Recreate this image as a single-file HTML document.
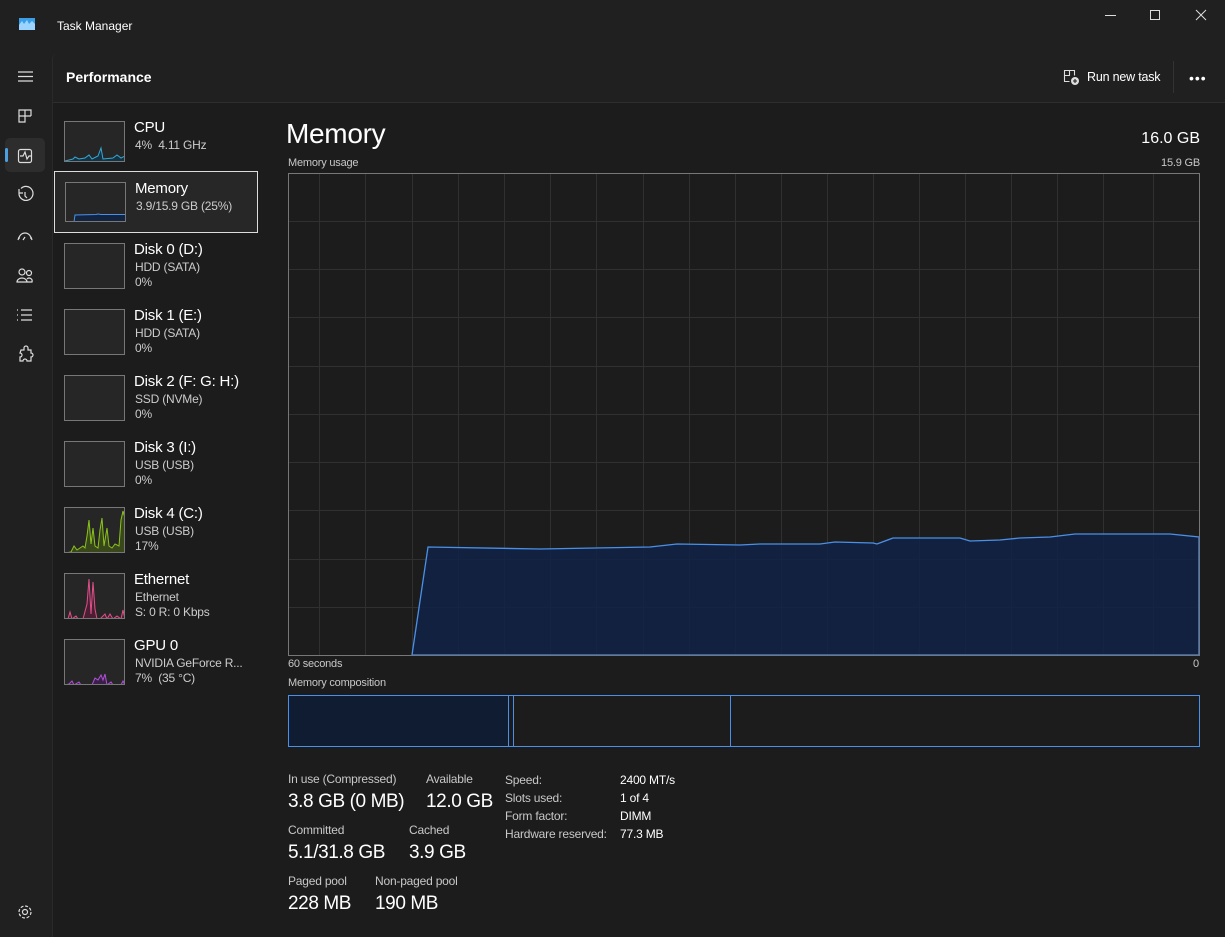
<!DOCTYPE html>
<html><head><meta charset="utf-8"><style>
*{margin:0;padding:0;box-sizing:border-box}
body{width:1225px;height:937px;background:#202020;font-family:"Segoe UI","Liberation Sans",sans-serif;color:#fff;position:relative;overflow:hidden}
.a{position:absolute;white-space:nowrap}
.main{position:absolute;left:52px;top:52px;width:1173px;height:885px;background:#1c1c1c;border-top-left-radius:8px;border-left:1px solid #2a2a2a}
.hdr{position:absolute;left:0;top:0;width:100%;height:51px;background:#202020;border-bottom:1px solid #2e2e2e;border-top-left-radius:8px}
.th{position:absolute;border:1px solid #777;background:#262626;overflow:hidden}
.nm{font-size:15px;color:#fff;letter-spacing:-0.2px}
.sb{font-size:12px;color:#ccc;letter-spacing:-0.2px}
.lab{font-size:12px;color:#c8c8c8;letter-spacing:-0.2px}
.val{font-size:19px;color:#fff;letter-spacing:-0.4px}
</style></head><body>
<svg class="a" style="left:19px;top:18px" width="16" height="12" viewBox="0 0 16 12"><rect width="16" height="12" fill="#3a9fe6"/><path d="M0 7 L3 3 L5 6 L8 2 L10 6 L13 3 L16 6 L16 12 L0 12Z" fill="#9ad4ff"/></svg>
<div class="a" style="left:57px;top:19px;font-size:12px;color:#fff">Task Manager</div>
<svg class="a" style="left:1100px;top:8px" width="120" height="16"><line x1="5" y1="7.5" x2="16" y2="7.5" stroke="#ddd"/><rect x="50.5" y="2.5" width="9" height="9" fill="none" stroke="#ddd"/><path d="M96 2 L106 12 M106 2 L96 12" stroke="#ddd"/></svg>
<svg class="a" style="left:0;top:60px" width="52" height="320" fill="none" stroke="#ddd" stroke-width="1.2">
<path d="M18 12h15M18 16.5h15M18 21h15"/>
<path d="M19 50h6v6h-6zM25 50h6v6M19 56v6h6v-6h6"/>
<rect x="5" y="78" width="40" height="34" rx="5" fill="#2d2d2d" stroke="none"/>
<rect x="5" y="88" width="3" height="14" rx="1.5" fill="#4ca0e0" stroke="none"/>
<rect x="18.5" y="89.5" width="13" height="13" rx="2"/><path d="M20 96h3l2-4 2 7 2-3h2"/>
<path d="M19 133a7 7 0 1 0 2-4.5M19 129v4h4M25 132v4l2 2"/>
<path d="M19 179a6 6 0 0 1 12 0M23 180l2-3M19 177l-1 3M31 177l1 3"/>
<circle cx="22" cy="212" r="3"/><circle cx="29" cy="213" r="2.5"/><path d="M17 222a5 4 0 0 1 10 0zM26 222h6a3 3 0 0 0-5-3"/>
<path d="M21 250h11M21 255h11M21 260h11M17 250h1M17 255h1M17 260h1"/>
<path d="M21 290h3v-2a2 2 0 0 1 4 0v2h3v3a2 2 0 0 1 0 4v4h-4a2 2 0 0 0-4 0h-3v-4a2 2 0 0 0 0-4z"/>
</svg>
<svg class="a" style="left:17px;top:904px" width="16" height="16" fill="none" stroke="#ddd" stroke-width="1.2"><circle cx="8" cy="8" r="2.5"/><circle cx="8" cy="8" r="6" stroke-dasharray="3 1.7"/></svg>
<div class="main">
<div class="hdr"></div>
</div>
<div class="a" style="left:66px;top:69px;font-size:14px;font-weight:bold">Performance</div>
<svg class="a" style="left:1063px;top:69px" width="17" height="17" fill="none" stroke="#ddd" stroke-width="1.1"><path d="M1.5 1.5h5v5h-5zM6.5 1.5h5v5M1.5 6.5v6h5"/><circle cx="12" cy="12" r="4" fill="#ddd" stroke="none"/><path d="M12 10v4M10 12h4" stroke="#222"/></svg>
<div class="a" style="left:1087px;top:70px;font-size:12.5px;letter-spacing:-0.2px">Run new task</div>
<div class="a" style="left:1173px;top:61px;width:1px;height:32px;background:#333"></div>
<div class="a" style="left:1189px;top:70px;font-size:14px;letter-spacing:1px">•••</div>
<div class="th" style="left:64px;top:121px;width:61px;height:41px"><svg width="60" height="40"><path d="M0 39 L8 37 L10 35 L14 37 L20 36 L24 33 L27 37 L33 34 L36 26 L38 37 L48 36 L52 33 L56 36 L60 34 L60 40 L0 40Z" fill="#123245" stroke="#38a7d0"/></svg></div>
<div class="nm a" style="left:134px;top:119px">CPU</div><div class="sb a" style="left:135px;top:138px">4%&nbsp; 4.11 GHz</div>
<div class="a" style="left:54px;top:171px;width:204px;height:62px;border:1px solid #ddd;background:#272727"></div>
<div class="th" style="left:65px;top:182px;width:61px;height:40px"><svg width="60" height="39"><path d="M8 39 L9 32 L30 31.5 L32 31 L35 31.5 L60 31.5 L60 39Z" fill="#132440" stroke="#4a90e8"/></svg></div>
<div class="nm a" style="left:135px;top:180px">Memory</div><div class="sb a" style="left:136px;top:199px">3.9/15.9 GB (25%)</div>
<div class="th" style="left:64px;top:243px;width:61px;height:46px"></div>
<div class="nm a" style="left:134px;top:241px">Disk 0 (D:)</div><div class="sb a" style="left:135px;top:260px">HDD (SATA)</div><div class="sb a" style="left:135px;top:275px">0%</div>
<div class="th" style="left:64px;top:309px;width:61px;height:46px"></div>
<div class="nm a" style="left:134px;top:307px">Disk 1 (E:)</div><div class="sb a" style="left:135px;top:326px">HDD (SATA)</div><div class="sb a" style="left:135px;top:341px">0%</div>
<div class="th" style="left:64px;top:375px;width:61px;height:46px"></div>
<div class="nm a" style="left:134px;top:373px">Disk 2 (F: G: H:)</div><div class="sb a" style="left:135px;top:392px">SSD (NVMe)</div><div class="sb a" style="left:135px;top:407px">0%</div>
<div class="th" style="left:64px;top:441px;width:61px;height:46px"></div>
<div class="nm a" style="left:134px;top:439px">Disk 3 (I:)</div><div class="sb a" style="left:135px;top:458px">USB (USB)</div><div class="sb a" style="left:135px;top:473px">0%</div>
<div class="th" style="left:64px;top:507px;width:61px;height:46px"><svg width="60" height="45"><path d="M0 45 L6 44 L9 38 L12 42 L18 38 L20 40 L22 28 L24 12 L26 36 L28 20 L30 38 L33 40 L35 22 L37 10 L39 38 L42 20 L44 38 L47 40 L50 36 L54 38 L56 12 L58 3 L60 10 L60 45Z" fill="#38481a" stroke="#8cc21e"/></svg></div>
<div class="nm a" style="left:134px;top:505px">Disk 4 (C:)</div><div class="sb a" style="left:135px;top:524px">USB (USB)</div><div class="sb a" style="left:135px;top:539px">17%</div>
<div class="th" style="left:64px;top:573px;width:61px;height:46px"><svg width="60" height="45"><path d="M0 45 L3 45 L5 38 L7 45 L11 42 L13 45 L18 45 L22 30 L24 5 L26 40 L28 8 L30 35 L32 45 L35 45 L40 40 L42 45 L45 40 L48 45 L52 42 L56 45 L58 36 L60 45Z" fill="#4a1f33" stroke="#e0508a"/></svg></div>
<div class="nm a" style="left:134px;top:571px">Ethernet</div><div class="sb a" style="left:135px;top:590px">Ethernet</div><div class="sb a" style="left:135px;top:605px">S: 0 R: 0 Kbps</div>
<div class="th" style="left:64px;top:639px;width:61px;height:46px"><svg width="60" height="45"><path d="M0 45 L4 44 L7 41 L9 45 L14 42 L16 45 L27 45 L30 38 L33 40 L36 35 L38 40 L40 34 L42 45 L46 42 L48 45 L56 45 L58 41 L60 45Z" fill="#3a1f48" stroke="#b050d8"/></svg></div>
<div class="nm a" style="left:134px;top:637px">GPU 0</div><div class="sb a" style="left:135px;top:656px">NVIDIA GeForce R...</div><div class="sb a" style="left:135px;top:671px">7%&nbsp; (35 °C)</div>
<div class="a" style="left:286px;top:118px;font-size:28px;letter-spacing:-0.3px">Memory</div>
<div class="a" style="right:25px;top:130px;font-size:16px">16.0 GB</div>
<div class="a lab" style="left:288px;top:157px;font-size:11px">Memory usage</div>
<div class="a lab" style="right:25px;top:157px;font-size:11px">15.9 GB</div>
<svg class="a" style="left:288px;top:173px" width="912" height="483">
<g stroke="#303030" stroke-width="1">
<line x1="31.5" y1="0" x2="31.5" y2="483"/><line x1="77.5" y1="0" x2="77.5" y2="483"/><line x1="124.5" y1="0" x2="124.5" y2="483"/><line x1="170.5" y1="0" x2="170.5" y2="483"/><line x1="216.5" y1="0" x2="216.5" y2="483"/><line x1="262.5" y1="0" x2="262.5" y2="483"/><line x1="308.5" y1="0" x2="308.5" y2="483"/><line x1="355.5" y1="0" x2="355.5" y2="483"/><line x1="401.5" y1="0" x2="401.5" y2="483"/><line x1="447.5" y1="0" x2="447.5" y2="483"/><line x1="493.5" y1="0" x2="493.5" y2="483"/><line x1="539.5" y1="0" x2="539.5" y2="483"/><line x1="585.5" y1="0" x2="585.5" y2="483"/><line x1="631.5" y1="0" x2="631.5" y2="483"/><line x1="677.5" y1="0" x2="677.5" y2="483"/><line x1="723.5" y1="0" x2="723.5" y2="483"/><line x1="769.5" y1="0" x2="769.5" y2="483"/><line x1="815.5" y1="0" x2="815.5" y2="483"/><line x1="865.5" y1="0" x2="865.5" y2="483"/>
<line x1="0" y1="48.5" x2="912" y2="48.5"/><line x1="0" y1="96.5" x2="912" y2="96.5"/><line x1="0" y1="144.5" x2="912" y2="144.5"/><line x1="0" y1="193.5" x2="912" y2="193.5"/><line x1="0" y1="241.5" x2="912" y2="241.5"/><line x1="0" y1="289.5" x2="912" y2="289.5"/><line x1="0" y1="337.5" x2="912" y2="337.5"/><line x1="0" y1="386.5" x2="912" y2="386.5"/><line x1="0" y1="434.5" x2="912" y2="434.5"/>
</g>
<path d="M124 482 L140 374 L252 376 L362 374 L389 371 L452 372 L472 371 L532 371 L547 369 L585 370 L589 371 L605 365 L672 365 L682 368 L712 367 L732 365 L762 364 L787 361 L882 361 L911 364 L911 482Z" fill="rgba(16,34,70,0.85)" stroke="#4a90e8" stroke-width="1.3"/>
<rect x="0.5" y="0.5" width="911" height="482" fill="none" stroke="#777"/>
</svg>
<div class="a lab" style="left:288px;top:658px;font-size:11px">60 seconds</div>
<div class="a lab" style="left:1193px;top:658px;font-size:11px">0</div>
<div class="a lab" style="left:288px;top:677px;font-size:11px">Memory composition</div>
<svg class="a" style="left:288px;top:695px" width="912" height="52"><rect x="0.5" y="0.5" width="220" height="51" fill="#0f1c32"/><g stroke="#4a90e8"><line x1="220.5" y1="0" x2="220.5" y2="52"/><line x1="225.5" y1="0" x2="225.5" y2="52"/><line x1="442.5" y1="0" x2="442.5" y2="52"/></g><rect x="0.5" y="0.5" width="911" height="51" fill="none" stroke="#4a90e8"/></svg>
<div class="a lab" style="left:288px;top:772px">In use (Compressed)</div><div class="a lab" style="left:426px;top:772px">Available</div>
<div class="a val" style="left:288px;top:791px">3.8 GB (0 MB)</div><div class="a val" style="left:426px;top:791px">12.0 GB</div>
<div class="a lab" style="left:288px;top:823px">Committed</div><div class="a lab" style="left:409px;top:823px">Cached</div>
<div class="a val" style="left:288px;top:842px">5.1/31.8 GB</div><div class="a val" style="left:409px;top:842px">3.9 GB</div>
<div class="a lab" style="left:288px;top:874px">Paged pool</div><div class="a lab" style="left:375px;top:874px">Non-paged pool</div>
<div class="a val" style="left:288px;top:893px">228 MB</div><div class="a val" style="left:375px;top:893px">190 MB</div>
<div class="a lab" style="left:505px;top:771px;line-height:18px">Speed:<br>Slots used:<br>Form factor:<br>Hardware reserved:</div>
<div class="a lab" style="left:620px;top:771px;line-height:18px;color:#fff">2400 MT/s<br>1 of 4<br>DIMM<br>77.3 MB</div>
</body></html>
